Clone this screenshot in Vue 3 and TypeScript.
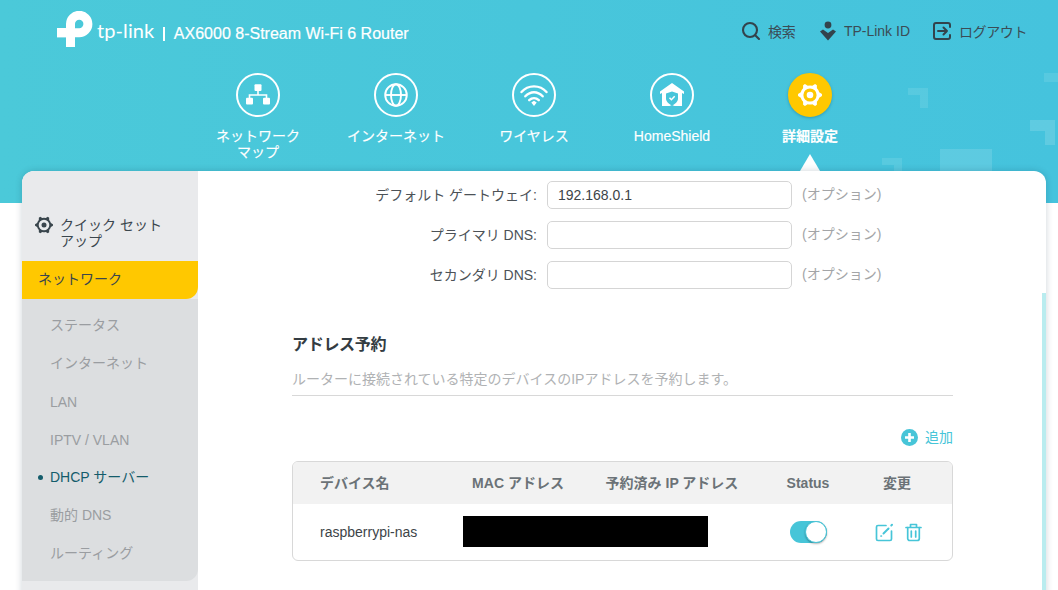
<script setup lang="ts">
function gearPath(tip: number, body: number, c: number): string {
  const pt = (deg: number, rad: number) => {
    const a = (deg * Math.PI) / 180
    return `${(c + rad * Math.cos(a)).toFixed(2)} ${(c + rad * Math.sin(a)).toFixed(2)}`
  }
  let d = ''
  for (let i = 0; i < 6; i++) {
    const t = i * 60
    d += `${i ? 'L' : 'M'}${pt(t - 16, body)} L${pt(t - 5, tip)} L${pt(t + 5, tip)} L${pt(t + 16, body)} `
    d += `A${body} ${body} 0 0 1 ${pt(t + 44, body)} `
  }
  return d + 'Z'
}
const navItems = [
  { key: 'map', lines: ['ネットワーク', 'マップ'] },
  { key: 'net', lines: ['インターネット'] },
  { key: 'wifi', lines: ['ワイヤレス'] },
  { key: 'home', lines: ['HomeShield'] },
  { key: 'adv', lines: ['詳細設定'] },
]
const subItems = ['ステータス', 'インターネット', 'LAN', 'IPTV / VLAN', 'DHCP サーバー', '動的 DNS', 'ルーティング']
const fields = [
  { label: 'デフォルト ゲートウェイ:', value: '192.168.0.1' },
  { label: 'プライマリ DNS:', value: '' },
  { label: 'セカンダリ DNS:', value: '' },
]
const bigGear = gearPath(12, 9.6, 22)
const smallGear = gearPath(9, 7.2, 10)
</script>

<template>
  <div class="page">
    <header class="hero">
      <i class="deco d1"></i><i class="deco d2"></i><i class="deco d3"></i><i class="deco d4"></i><i class="block"></i>
      <div class="top">
        <div class="brand">
          <svg class="logo" width="36" height="36" viewBox="0 0 36 36">
            <path d="M13.5 36V13a8.7 8.7 0 1 1 8.7 8.7H18" fill="none" stroke="#fff" stroke-width="9" />
            <rect x="0" y="17" width="14" height="9.4" fill="#fff" />
          </svg>
          <span class="word">tp-link</span>
          <span class="sep"></span>
          <span class="model">AX6000 8-Stream Wi-Fi 6 Router</span>
        </div>
        <div class="tools">
          <span class="tool t1">
            <svg width="20" height="20" viewBox="0 0 20 20" fill="none" stroke="#33434c" stroke-width="2.1" stroke-linecap="round">
              <circle cx="9" cy="9" r="7" /><path d="M14.2 14.2L18 18" />
            </svg>
            検索
          </span>
          <span class="tool t2">
            <svg width="18" height="20" viewBox="0 0 18 20" fill="#33434c">
              <circle cx="9" cy="4" r="3.4" />
              <path d="M1 10.5L4 8.6L9 12L14 8.6L17 10.5L9 19.5Z" />
            </svg>
            TP-Link ID
          </span>
          <span class="tool t3">
            <svg width="18" height="18" viewBox="0 0 18 18" fill="none" stroke="#33434c" stroke-width="2" stroke-linecap="round" stroke-linejoin="round">
              <path d="M17 5V3a2 2 0 0 0-2-2H3a2 2 0 0 0-2 2v12a2 2 0 0 0 2 2h12a2 2 0 0 0 2-2v-2" />
              <path d="M5 9H14M10.5 5.5L14 9L10.5 12.5" />
            </svg>
            <span class="logout">ログアウト</span>
          </span>
        </div>
      </div>
      <nav class="nav">
        <div v-for="n in navItems" :key="n.key" class="nav-item" :class="{ active: n.key === 'adv' }">
          <span class="circle">
            <svg v-if="n.key === 'map'" width="44" height="44" viewBox="0 0 44 44" fill="#fff">
              <rect x="18.5" y="11.3" width="7" height="6.7" rx="1" />
              <path d="M13.5 27V22H30.500V27M22 18V22" fill="none" stroke="#fff" stroke-width="1.6" />
              <rect x="10" y="24.700" width="7" height="6.700" rx="1" />
              <rect x="27" y="24.700" width="7" height="6.700" rx="1" />
            </svg>
            <svg v-else-if="n.key === 'net'" width="44" height="44" viewBox="0 0 44 44" fill="none" stroke="#fff" stroke-width="1.900">
              <circle cx="22" cy="22" r="10.800" />
              <ellipse cx="22" cy="22" rx="5" ry="10.800" />
              <path d="M11 22H33" />
            </svg>
            <svg v-else-if="n.key === 'wifi'" width="44" height="44" viewBox="0 0 44 44" fill="none" stroke="#fff" stroke-width="2.400" stroke-linecap="round">
              <path d="M9.500 19C16 11.500 28 11.500 34.500 19" />
              <path d="M13.300 23.300C18.500 17.800 25.500 17.800 30.700 23.300" />
              <path d="M17.200 27.200C20 24.500 24 24.500 26.800 27.200" />
              <path d="M19.300 29.600L22 27.800L24.700 29.600L22 33Z" fill="#fff" stroke="none" />
            </svg>
            <svg v-else-if="n.key === 'home'" width="44" height="44" viewBox="0 0 44 44">
              <path d="M22 10L34 18.500V21L32 20V33H24.500L22 32L19.500 33H12V20L10 21V18.500Z" fill="#fff" />
              <path d="M22 18.500L28 20.500V25.500C28 29 25 31 22 32.500C19 31 16 29 16 25.500V20.500Z" fill="#47c5da" />
              <path d="M19.500 24.800L21.400 26.700L24.700 23.300" fill="none" stroke="#fff" stroke-width="1.500" />
            </svg>
            <svg v-else width="44" height="44" viewBox="0 0 44 44">
              <path :d="bigGear" fill="#fff" />
              <circle cx="22" cy="22" r="6.600" fill="#ffc800" />
              <circle cx="22" cy="22" r="3.300" fill="#fff" />
            </svg>
          </span>
          <span class="nav-label"><span v-for="l in n.lines" :key="l" class="nav-line">{{ l }}</span></span>
          <i v-if="n.key === 'adv'" class="caret"></i>
        </div>
      </nav>
    </header>

    <section class="card">
      <aside class="side">
        <div class="quick">
          <svg class="quick-ico" width="20" height="20" viewBox="0 0 20 20">
            <path :d="smallGear" fill="#3a464d" />
            <circle cx="10" cy="10" r="5.300" fill="#e9eaec" />
            <circle cx="10" cy="10" r="2.500" fill="#3a464d" />
          </svg>
          <span class="quick-text">クイック セット<br />アップ</span>
        </div>
        <div class="section-head">ネットワーク</div>
        <ul class="sub">
          <li v-for="s in subItems" :key="s" :class="{ on: s === 'DHCP サーバー', latin: s === 'LAN' || s === 'IPTV / VLAN' }">{{ s }}</li>
        </ul>
      </aside>

      <main class="main">
        <div v-for="f in fields" :key="f.label" class="row">
          <label class="lab">{{ f.label }}</label>
          <div class="input">{{ f.value }}</div>
          <span class="hint">(オプション)</span>
        </div>

        <div class="block-wrap">
          <h2 class="title">アドレス予約</h2>
          <p class="desc">ルーターに接続されている特定のデバイスのIPアドレスを予約します。</p>
          <div class="add">
            <svg width="17" height="17" viewBox="0 0 17 17">
              <circle cx="8.500" cy="8.500" r="8.500" fill="#47c5d8" />
              <path d="M8.500 4V13M4 8.500H13" stroke="#fff" stroke-width="2.600" />
            </svg>
            <span class="add-text">追加</span>
          </div>
          <div class="table">
            <div class="thead">
              <span class="c-name">デバイス名</span>
              <span>MAC アドレス</span>
              <span>予約済み IP アドレス</span>
              <span class="st">Status</span>
              <span>変更</span>
            </div>
            <div class="tbody">
              <span class="c-name dev">raspberrypi-nas</span>
              <span class="mask"></span>
              <span class="cell"><span class="toggle"><i class="knob"></i></span></span>
              <span class="cell acts">
                <svg width="19" height="19" viewBox="0 0 19 19" fill="none" stroke="#47c5d8" stroke-width="1.700" stroke-linecap="round" stroke-linejoin="round">
                  <path d="M11 2.500H3a1.500 1.500 0 0 0-1.500 1.500V16a1.500 1.500 0 0 0 1.500 1.500H15a1.500 1.500 0 0 0 1.500-1.500V8" />
                  <path d="M8.500 10.500L13.500 5.500" stroke-width="2" />
                  <path d="M16.300 2.500L17 1.800" stroke-width="2" />
                  <path d="M6 13H6.400" />
                </svg>
                <svg width="17" height="19" viewBox="0 0 17 19" fill="none" stroke="#47c5d8" stroke-width="1.700" stroke-linecap="round" stroke-linejoin="round">
                  <path d="M1 4.500H16M5.500 4.500V1.500H11.500V4.500" />
                  <path d="M2.700 4.500V15.500A2 2 0 0 0 4.700 17.500H12.300A2 2 0 0 0 14.300 15.500V4.500" />
                  <path d="M6.300 8V14M10.700 8V14" />
                </svg>
              </span>
            </div>
          </div>
        </div>
      </main>
      <i class="strip"></i>
    </section>
  </div>
</template>

<style scoped>
.page {
  position: relative;
  height: 590px;
  overflow: hidden;
  background: #fff;
  font-family: "Liberation Sans", "Noto Sans CJK JP", sans-serif;
  font-size: 14px;
}
.hero {
  position: relative;
  height: 203px;
  background: linear-gradient(90deg, #4bc9d9, #45c3dd);
  overflow: hidden;
}
.deco {
  position: absolute;
  width: 20px;
  height: 20px;
  border-top: 7px solid rgba(255, 255, 255, 0.1);
  border-right: 8px solid rgba(255, 255, 255, 0.1);
  box-sizing: border-box;
}
.d1 { left: 908px; top: 88px; }
.d2 { left: 1030px; top: 120px; width: 25px; height: 25px; border-top-width: 11px; border-right-width: 10px; border-color: rgba(255, 255, 255, 0.14); }
.d3 { left: 1044px; top: 73px; width: 25px; height: 25px; border-top-width: 9px; border-right-width: 10px; }
.d4 { left: 882px; top: 158px; }
.block {
  position: absolute;
  left: 940px;
  top: 149px;
  width: 52px;
  height: 54px;
  background: rgba(255, 255, 255, 0.13);
}
.top {
  display: flex;
  justify-content: space-between;
  padding: 11px 31px 0 57px;
  height: 36px;
}
.brand {
  display: flex;
  align-items: center;
}
.logo { flex: none; }
.word {
  margin-left: 4px;
  margin-top: 1px;
  color: #fff;
  font-family: Lato, "Liberation Sans", sans-serif;
  font-size: 20px;
  letter-spacing: 0.1px;
}
.sep {
  width: 1.500px;
  height: 14px;
  margin: 10px 9px 0 9px;
  background: #fff;
}
.model {
  margin-top: 10px;
  color: #fff;
  font-size: 16px;
  -webkit-text-stroke: 0.2px #fff;
}
.tools {
  display: flex;
  align-items: center;
  height: 40px;
  color: #3b4c56;
  font-size: 14px;
}
.tool {
  display: flex;
  align-items: center;
}
.t1 { gap: 7px; margin-right: 23px; }
.t2 { gap: 7px; margin-right: 23px; }
.t3 { gap: 8px; }
.logout { letter-spacing: -0.4px; }
.nav {
  display: flex;
  margin-top: 26px;
  padding-left: 189px;
}
.nav-item {
  position: relative;
  display: flex;
  flex-direction: column;
  align-items: center;
  width: 138px;
  color: #fff;
}
.circle {
  width: 44px;
  height: 44px;
  border: 2px solid #fff;
  border-radius: 50%;
  box-sizing: border-box;
  display: flex;
  align-items: center;
  justify-content: center;
}
.circle svg { flex: none; }
.active .circle {
  background: #ffc800;
  border-color: #ffc800;
  box-shadow: 0 1px 3px rgba(0, 80, 110, 0.35);
}
.nav-label {
  margin-top: 11px;
  text-align: center;
  line-height: 16px;
  -webkit-text-stroke: 0.15px #fff;
}
.active .nav-label { font-weight: 700; }
.nav-line { display: block; }
.caret {
  position: absolute;
  left: 59px;
  top: 81px;
  width: 0;
  height: 0;
  border-left: 10px solid transparent;
  border-right: 10px solid transparent;
  border-bottom: 17px solid #fff;
}
.card {
  position: relative;
  display: flex;
  height: 440px;
  margin: -32px 12px 0 22px;
  border-radius: 12px 12px 0 0;
  background: #fff;
  box-shadow: 0 0 7px rgba(0, 40, 60, 0.2);
  overflow: hidden;
}
.side {
  display: flex;
  flex-direction: column;
  width: 176px;
  flex: none;
  background: #e9eaec;
}
.quick {
  display: flex;
  height: 90px;
  padding: 46px 0 0 12px;
  box-sizing: border-box;
  color: #3a464d;
  line-height: 16px;
}
.quick-ico { margin: -2px 6px 0 0; flex: none; }
.section-head {
  height: 38px;
  line-height: 36px;
  padding-left: 16px;
  background: #ffc800;
  color: #3a464d;
  border-radius: 0 0 12px 0;
  position: relative;
  z-index: 1;
}
.sub {
  list-style: none;
  margin: 0;
  padding: 7px 0 9px 28px;
  background: #dcdee0;
  color: #9a9da1;
  border-radius: 0 0 12px 0;
}
.sub li {
  position: relative;
  height: 38px;
  line-height: 38px;
}
.sub .latin { line-height: 40px; }
.sub .on { color: #145c6b; }
.sub .on::before {
  content: "";
  position: absolute;
  left: -12px;
  top: 17px;
  width: 5px;
  height: 5px;
  border-radius: 50%;
  background: #145c6b;
}
.main {
  flex: 1;
  padding-top: 10px;
}
.row {
  display: flex;
  align-items: center;
  height: 28px;
  margin-bottom: 12px;
}
.lab {
  width: 339px;
  padding-bottom: 2px;
  text-align: right;
  color: #4c5257;
  white-space: nowrap;
}
.input {
  width: 245px;
  height: 28px;
  margin: 0 10px;
  padding-left: 10px;
  box-sizing: border-box;
  border: 1px solid #d5d5d5;
  border-radius: 5px;
  line-height: 26px;
  color: #3d4448;
}
.hint {
  padding-bottom: 4px;
  color: #a3a5a7;
}
.block-wrap {
  width: 661px;
  margin: 44px 0 0 94px;
}
.title {
  margin: 0;
  font-size: 16px;
  font-weight: 700;
  line-height: 24px;
  letter-spacing: -0.3px;
  color: #333c42;
}
.desc {
  margin: 12px 0 0;
  padding-bottom: 6px;
  border-bottom: 1px solid #d8d8d8;
  line-height: 20px;
  color: #b0b2b4;
  white-space: nowrap;
}
.add {
  display: flex;
  justify-content: flex-end;
  align-items: center;
  gap: 7px;
  height: 20px;
  margin-top: 31px;
  color: #47c5d8;
}
.add-text { padding-bottom: 2px; }
.table {
  margin-top: 14px;
  border: 1px solid #d8d8d8;
  border-radius: 6px;
  overflow: hidden;
}
.thead,
.tbody {
  display: grid;
  grid-template-columns: 160px 130px 178px 94px 84px;
  align-items: center;
  text-align: center;
}
.thead {
  height: 42px;
  background: #f2f2f2;
  color: #6b7277;
  font-weight: 700;
}
.thead span { padding-bottom: 2px; }
.thead .st { padding-bottom: 0; }
.tbody {
  height: 56px;
}
.c-name {
  text-align: left;
  padding-left: 27px;
}
.dev { color: #3d4448; }
.mask {
  grid-column: 2 / 4;
  width: 245px;
  height: 31px;
  margin: -2px 0 0 10px;
  background: #000;
}
.cell {
  display: flex;
  justify-content: center;
  align-items: center;
}
.acts {
  gap: 11px;
  padding-left: 2px;
}
.toggle {
  position: relative;
  width: 37px;
  height: 22px;
  border-radius: 11px;
  background: #47c5d8;
}
.knob {
  position: absolute;
  right: 0;
  top: 0;
  width: 22px;
  height: 22px;
  box-sizing: border-box;
  border: 1px solid #47c5d8;
  border-radius: 50%;
  background: #fff;
  box-shadow: 0 1px 2px rgba(0, 0, 0, 0.3);
}
.strip {
  position: absolute;
  right: 0;
  top: 122px;
  bottom: 0;
  width: 4px;
  background: #b9ecef;
}
</style>

<style>
html, body { overflow: hidden; background: #fff; }
</style>
